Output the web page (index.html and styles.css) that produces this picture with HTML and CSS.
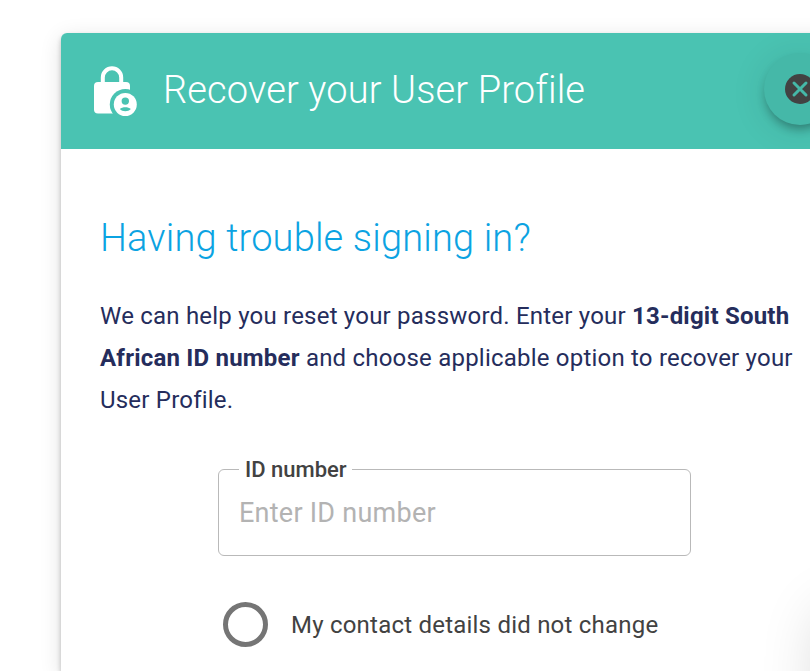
FILE: index.html
```html
<!DOCTYPE html>
<html lang="en">

<head>
    <meta charset="UTF-8">
    <meta name="viewport" content="width=device-width, initial-scale=1.0">
    <title>Recover your User Profile</title>
    <link rel="stylesheet" href="styles.css">
</head>

<body>
    <main class="card">
        <header class="card-header">
            <svg class="lock-icon" width="46" height="52" viewBox="0 0 46 52">
                <path d="M10.800 19v-6.500a9.200 9.200 0 0 1 18.400 0v6.500" fill="none" stroke="#fff" stroke-width="4" />
                <rect x="2" y="17" width="36" height="31.5" rx="4" fill="#fff" />
                <circle cx="33.3" cy="39.5" r="15.5" fill="#4ac3b2" />
                <circle cx="33.3" cy="39.5" r="11.5" fill="#fff" />
                <circle cx="33.3" cy="36.1" r="3.7" fill="#4ac3b2" />
                <path d="M27.8 44.1c2.6-2.6 8.4-2.6 11 0-2.6 3-8.4 3-11 0z" fill="#4ac3b2" />
            </svg>
            <h1>Recover your User Profile</h1>
            <button class="close-button" aria-label="Close">
                <svg width="30" height="30" viewBox="0 0 30 30">
                    <circle cx="15" cy="15" r="15" fill="#424242" />
                    <path d="M9 9l12 12M21 9L9 21" stroke="#45b8a8" stroke-width="3" stroke-linecap="round" />
                </svg>
            </button>
        </header>

        <section class="card-content">
            <h2>Having trouble signing in?</h2>
            <p>We can help you reset your password. Enter your <b>13-digit South African ID number</b> and choose
                applicable option to recover your User Profile.</p>

            <form class="recover-form">
                <fieldset class="id-field">
                    <legend>ID number</legend>
                    <input type="text" id="idNumber" aria-label="ID number" placeholder="Enter ID number">
                </fieldset>
                <label class="option">
                    <input type="radio" name="contactDetails" value="same">
                    <span>My contact details did not change</span>
                </label>
            </form>
        </section>
    </main>
    <div class="chat-launcher"></div>
</body>

</html>
```

FILE: styles.css
```css
* {
    box-sizing: border-box;
}

body {
    margin: 0;
    padding: 33px 0 0 61px;
    height: 671px;
    overflow: hidden;
    background: #fff;
    font-family: Roboto, "Liberation Sans", sans-serif;
}

.card {
    width: 780px;
    height: 638px;
    border-radius: 6px 6px 0 0;
    background: #fff;
    box-shadow: 0 3px 5px rgba(0, 0, 0, 0.24), 0 5px 22px rgba(0, 0, 0, 0.12);
}

.card-header {
    display: flex;
    align-items: center;
    height: 116px;
    padding: 0 5px 0 31px;
    border-radius: 6px 6px 0 0;
    background: #4ac3b2;
    overflow: hidden;
}

.lock-icon {
    flex: none;
}

.card-header h1 {
    margin: 0 0 2px 25px;
    font-size: 38px;
    font-weight: 300;
    line-height: 48px;
    letter-spacing: 0.14px;
    white-space: nowrap;
    color: #fff;
}

.close-button {
    display: flex;
    flex: none;
    align-items: center;
    justify-content: center;
    width: 72px;
    height: 72px;
    margin: 0 0 4px auto;
    padding: 0;
    border: 0;
    border-radius: 50%;
    background: #45b8a8;
    box-shadow: 0 6px 10px -2px rgba(0, 0, 0, 0.3), 0 4px 36px rgba(0, 0, 0, 0.1);
}

.card-content {
    padding: 65px 40px 0 39px;
}

.card-content h2 {
    margin: 0;
    font-size: 38px;
    font-weight: 300;
    line-height: 48px;
    letter-spacing: 0.16px;
    color: #0ba3e2;
}

.card-content p {
    width: 701px;
    margin: 33px 0 0;
    font-size: 24px;
    line-height: 42px;
    letter-spacing: 0.21px;
    color: #252d5c;
}

.recover-form {
    margin: 36px 0 0 118px;
}

.id-field {
    width: 473px;
    height: 99px;
    margin: 0;
    padding: 0 20px;
    border: 1px solid #b9b9b9;
    border-radius: 6px;
}

.id-field legend {
    padding: 0 5px 0 6px;
    font-size: 22px;
    font-weight: 500;
    line-height: 25px;
    color: #424242;
}

.id-field input {
    display: block;
    width: 100%;
    height: 62px;
    padding: 0;
    border: 0;
    outline: 0;
    background: transparent;
    font-family: inherit;
    font-size: 27px;
    letter-spacing: 0.25px;
}

.id-field input::placeholder {
    color: #b3b3b3;
}

.option {
    display: flex;
    align-items: center;
    margin: 46px 0 0 5px;
    font-size: 24px;
    letter-spacing: 0.22px;
    color: #424242;
}

.option input {
    appearance: none;
    width: 45px;
    height: 45px;
    margin: 0 23px 0 0;
    border: 5px solid #757575;
    border-radius: 50%;
}

/* sits just off the right edge, only its shadow shows */
.chat-launcher {
    position: fixed;
    top: 610px;
    left: 820px;
    width: 120px;
    height: 300px;
    border-radius: 20px;
    box-shadow: 0 0 60px rgba(0, 0, 0, 0.16);
}
```
